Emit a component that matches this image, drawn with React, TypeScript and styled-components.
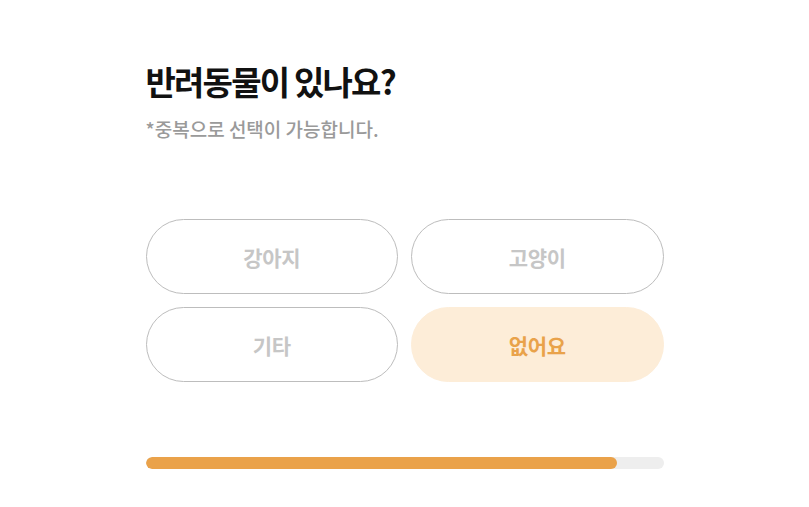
import styled, { createGlobalStyle } from "styled-components";

const GlobalStyle = createGlobalStyle`
  body {
    margin: 0;
    background: #fff;
    font-family: "Noto Sans CJK KR", "Noto Sans", sans-serif;
  }
`;

const Page = styled.main`
  width: 518px;
  margin: 0 auto;
  padding-top: 57px;
  display: flex;
  flex-direction: column;
`;

const Title = styled.h1`
  margin: 0;
  font-size: 33px;
  font-weight: 700;
  letter-spacing: -1.8px;
  line-height: 48px;
  color: #111;
`;

const Subtitle = styled.p`
  margin: 10px 0 0;
  font-size: 19px;
  font-weight: 500;
  letter-spacing: 0;
  line-height: 28px;
  color: #9a9a9a;
`;

const Options = styled.div`
  margin-top: 76px;
  display: grid;
  grid-template-columns: 1fr 1fr;
  gap: 13px;
`;

const Option = styled.button<{ $selected?: boolean }>`
  height: 75px;
  border-radius: 40px;
  border: 1px solid ${(p) => (p.$selected ? "#fdedd8" : "#bdbdbd")};
  background: ${(p) => (p.$selected ? "#fdedd8" : "#fff")};
  color: ${(p) => (p.$selected ? "#e9a24a" : "#c6c6c6")};
  font-family: inherit;
  font-size: 21px;
  font-weight: 700;
  letter-spacing: -0.3px;
  cursor: pointer;
`;

const Track = styled.div`
  margin-top: 75px;
  height: 12px;
  border-radius: 6px;
  background: #eeeeee;
  overflow: hidden;
`;

const Fill = styled.div`
  height: 100%;
  border-radius: 6px;
  background: #eaa24a;
`;

const options = [
  { label: "강아지", selected: false },
  { label: "고양이", selected: false },
  { label: "기타", selected: false },
  { label: "없어요", selected: true },
];

export default function App() {
  const progress = 91.1;
  return (
    <>
      <GlobalStyle />
      <Page>
        <Title>반려동물이 있나요?</Title>
        <Subtitle>*중복으로 선택이 가능합니다.</Subtitle>
        <Options>
          {options.map((o) => (
            <Option key={o.label} $selected={o.selected}>
              {o.label}
            </Option>
          ))}
        </Options>
        <Track>
          <Fill style={{ width: `${progress}%` }} />
        </Track>
      </Page>
    </>
  );
}
